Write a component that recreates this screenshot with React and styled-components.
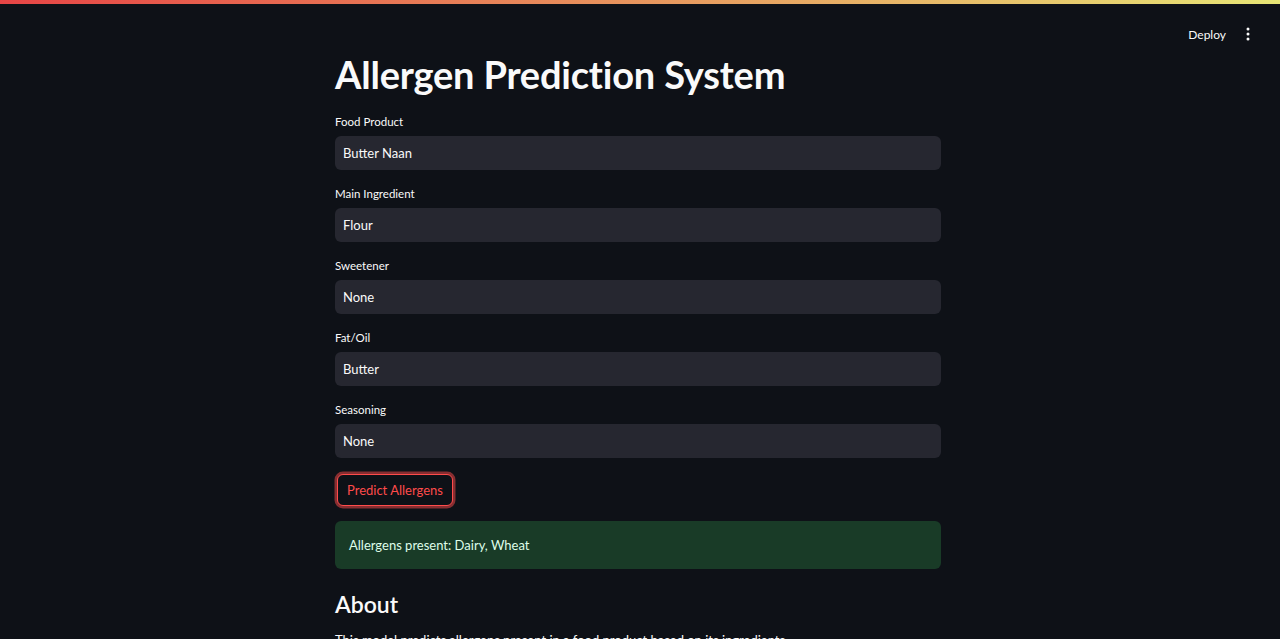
import styled, { createGlobalStyle } from 'styled-components';

const GlobalStyle = createGlobalStyle`
  html, body {
    margin: 0;
    padding: 0;
    background: #0e1117;
    height: 100%;
    overflow: hidden;
  }
  body {
    font-family: Lato, "Noto Sans", sans-serif;
    color: #fafafa;
  }
`;

const Page = styled.div`
  width: 100%;
  height: 639px;
  background: #0e1117;
  overflow: hidden;
`;

const Decoration = styled.div`
  height: 4px;
  background: linear-gradient(90deg, #ff4b4b, #fffd80);
  opacity: 0.9;
`;

const Header = styled.header`
  display: flex;
  justify-content: flex-end;
  align-items: center;
  gap: 12px;
  height: 60px;
  padding-right: 22px;
`;

const DeployButton = styled.button`
  background: transparent;
  border: none;
  color: #fafafa;
  font-family: inherit;
  font-size: 12px;
  padding: 4px 0;
  cursor: pointer;
`;

const MenuButton = styled.button`
  background: transparent;
  border: none;
  color: #fafafa;
  padding: 2px;
  display: flex;
  align-items: center;
  cursor: pointer;
`;

const Main = styled.main`
  width: 606px;
  margin: -12px 0 0 calc(50% - 305px);
  display: flex;
  flex-direction: column;
`;

const Title = styled.h1`
  margin: 0 0 17px;
  font-size: 38px;
  font-weight: 700;
  line-height: 1.2;
  letter-spacing: -0.2px;
`;

const Field = styled.div`
  display: flex;
  flex-direction: column;
  margin-bottom: 17px;
`;

const Label = styled.label`
  font-size: 11.5px;
  height: 14px;
  line-height: 14px;
  margin-bottom: 7px;
  color: #fafafa;
`;

const Input = styled.div`
  height: 34px;
  background: #262730;
  border-radius: 6px;
  display: flex;
  align-items: center;
  padding: 0 8px;
  font-size: 13px;
  color: #fafafa;
`;

const PredictButton = styled.button`
  align-self: flex-start;
  height: 32px;
  margin: -1px 0 15px 2px;
  padding: 0 9px;
  background: #0e1117;
  color: #ff4b4b;
  border: 1px solid #ff4b4b;
  border-radius: 6px;
  box-shadow: 0 0 0 2.5px rgba(255, 75, 75, 0.5);
  font-family: inherit;
  font-size: 13px;
  cursor: pointer;
`;

const Success = styled.div`
  height: 48px;
  display: flex;
  align-items: center;
  padding: 0 14px;
  background: #193b27;
  border-radius: 6px;
  color: #dffde9;
  font-size: 13px;
`;

const SectionTitle = styled.h2`
  margin: 22px 0 14px;
  font-size: 23px;
  font-weight: 600;
  line-height: 1.2;
`;

const Paragraph = styled.p`
  margin: 0;
  font-size: 13px;
`;

const fields = [
  { label: 'Food Product', value: 'Butter Naan' },
  { label: 'Main Ingredient', value: 'Flour' },
  { label: 'Sweetener', value: 'None' },
  { label: 'Fat/Oil', value: 'Butter' },
  { label: 'Seasoning', value: 'None' },
];

const App = () => (
  <Page>
    <GlobalStyle />
    <Decoration />
    <Header>
      <DeployButton>Deploy</DeployButton>
      <MenuButton aria-label="menu">
        <svg width="16" height="16" viewBox="0 0 16 16" fill="currentColor">
          <circle cx="8" cy="3" r="1.5" />
          <circle cx="8" cy="8" r="1.5" />
          <circle cx="8" cy="13" r="1.5" />
        </svg>
      </MenuButton>
    </Header>
    <Main>
      <Title>Allergen Prediction System</Title>
      {fields.map(f => (
        <Field key={f.label}>
          <Label>{f.label}</Label>
          <Input>{f.value}</Input>
        </Field>
      ))}
      <PredictButton>Predict Allergens</PredictButton>
      <Success>Allergens present: Dairy, Wheat</Success>
      <SectionTitle>About</SectionTitle>
      <Paragraph>This model predicts allergens present in a food product based on its ingredients.</Paragraph>
    </Main>
  </Page>
);

export default App;
